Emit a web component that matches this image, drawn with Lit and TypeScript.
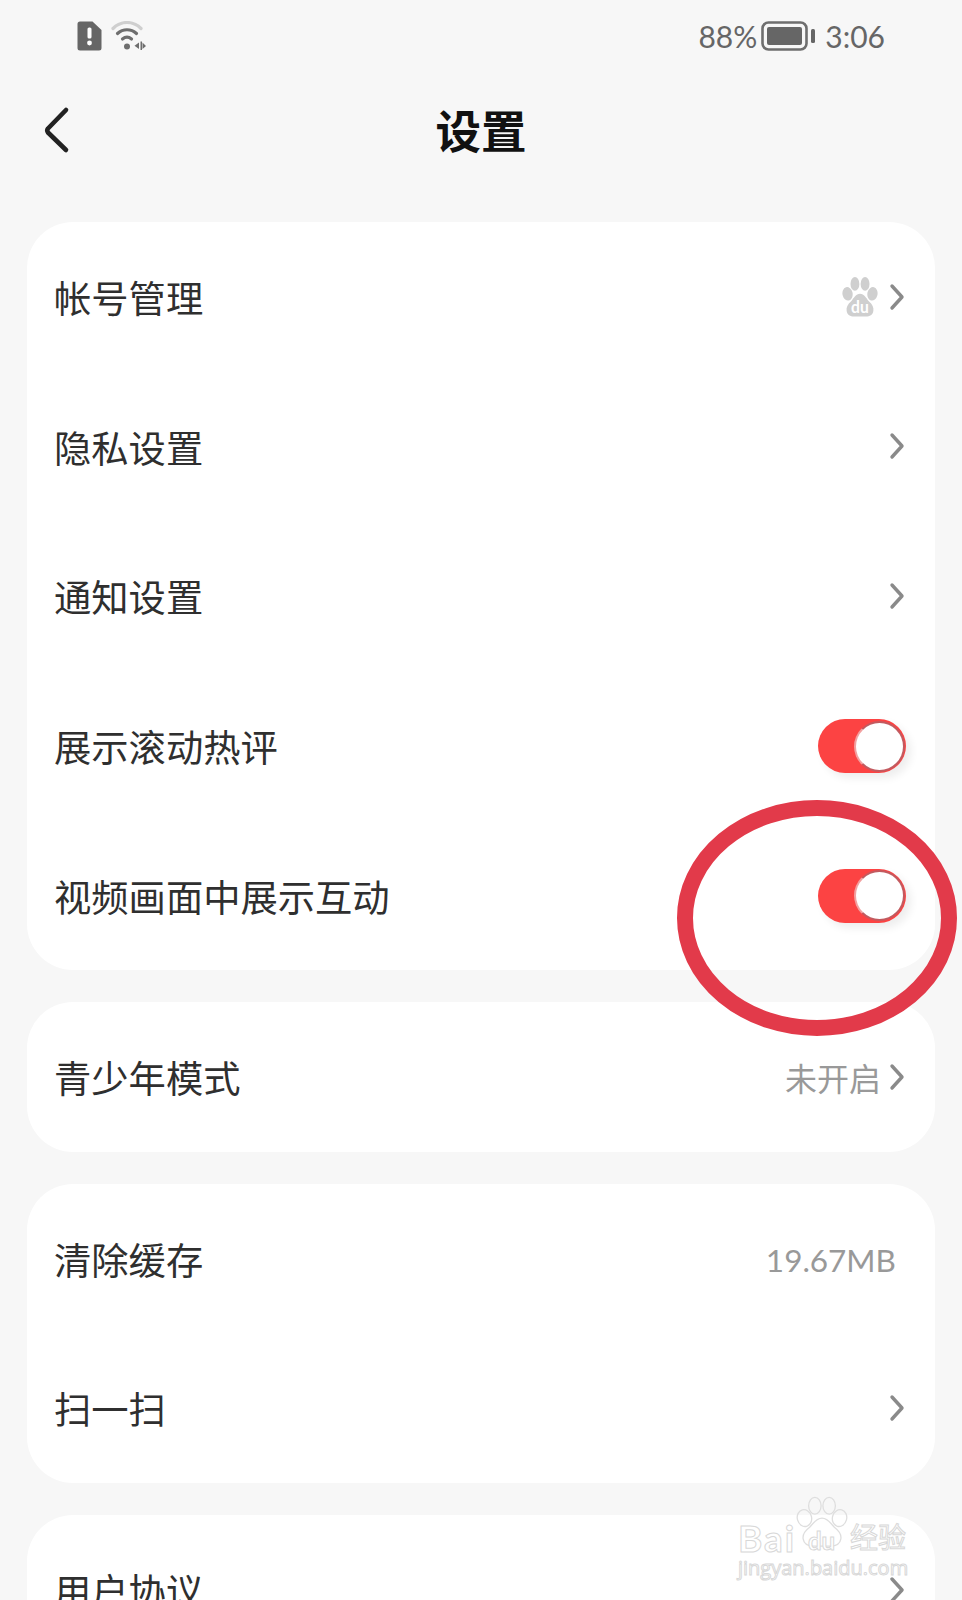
import { LitElement, html, css, svg } from "lit";
import { customElement } from "lit/decorators.js";

const chevron = html`<svg class="chev" viewBox="0 0 16 28" width="16" height="28"><path d="M3 3 L13 14 L3 25" fill="none" stroke="#8a8a8a" stroke-width="3.4" stroke-linecap="round" stroke-linejoin="round"/></svg>`;
const toggle = html`<span class="toggle"><span class="knob"></span></span>`;
const pawShapes = svg`
  <ellipse cx="6" cy="17" rx="5.5" ry="6.5" transform="rotate(-15 6 17)"/>
  <ellipse cx="14" cy="7.5" rx="4.8" ry="6.5"/>
  <ellipse cx="25" cy="7.5" rx="4.8" ry="6.5"/>
  <ellipse cx="33" cy="17" rx="5.5" ry="6.5" transform="rotate(15 33 17)"/>
  <path d="M19.5 17 C24 17 26 21 29 24 C33 27 34.5 30 34 33 C33.4 37 30 38.5 26 38.5 L13 38.5 C9 38.5 5.6 37 5 33 C4.5 30 6 27 10 24 C13 21 15 17 19.5 17 Z"/>`;

@customElement("app-root")
export class AppRoot extends LitElement {
  static styles = css`
    :host {
      display: block;
      position: relative;
      width: 962px;
      height: 1600px;
      overflow: hidden;
      background: #f7f7f7;
      font-family: "Noto Sans CJK SC", "Noto Sans", sans-serif;
      color: #2f2f2f;
    }
    .status {
      height: 74px;
      box-sizing: border-box;
      padding: 0 77px 3px 77px;
      display: flex;
      align-items: center;
      color: #666;
      font-family: "Lato", "Noto Sans", sans-serif;
      font-size: 30px;
    }
    .status .left { display: flex; align-items: center; gap: 9px; }
    .status .right { margin-left: auto; display: flex; align-items: center; gap: 10px; }
    .status .right .pct { margin-right: -6px; }
    .nav {
      height: 118px;
      margin-bottom: 30px;
      position: relative;
      display: flex;
      align-items: center;
      justify-content: center;
    }
    .title { font-size: 45.5px; font-weight: 700; color: #111; line-height: 1; margin-bottom: 6px; }
    .back { position: absolute; left: 43px; top: 32px; }
    .cards { display: flex; flex-direction: column; gap: 32px; padding: 0 27px; }
    .card { background: #fff; border-radius: 46px; }
    .row {
      height: 149.6px;
      padding: 0 29px 0 27px;
      display: flex;
      align-items: center;
      justify-content: space-between;
      font-size: 37.3px;
    }
    .label { line-height: 1; margin-top: 2px; }
    .end { display: flex; align-items: center; gap: 8px; color: #999; font-size: 32px; padding-right: 1px; }
    .latin { font-family: "Lato", "Noto Sans", sans-serif; margin-right: 10px; font-size: 31.5px; margin-top: 4px; padding-right: 0; }
    .paw { fill: #cfcfcf; margin-right: 3px; }
    .toggle {
      width: 88px;
      height: 54px;
      border-radius: 27px;
      background: #fc4343;
      position: relative;
      box-shadow: 5px 5px 9px rgba(0, 0, 0, 0.07);
      display: block;
      margin-top: 1px;
    }
    .knob {
      position: absolute;
      right: 1px;
      top: 1.5px;
      width: 51px;
      height: 51px;
      box-sizing: border-box;
      border-radius: 50%;
      background: #fff;
      border: 2px solid #c25a5f;
      border-left-color: #f2a0a0;
    }
    .chev { display: block; }
    .ring { position: absolute; left: 671px; top: 796px; pointer-events: none; }
    .mark { position: absolute; left: 736px; top: 1494px; width: 180px; height: 84px; pointer-events: none; }
    .mark .paw2 { position: absolute; left: 59px; top: 2px; fill: none; stroke: #dedede; stroke-width: 1; }
    .mark .t {
      position: absolute;
      white-space: nowrap;
      color: #fff;
      -webkit-text-stroke: 1px #d8d8d8;
      line-height: 1;
    }
    .mark .bai { left: 2px; top: 25px; font-family: "Lato", sans-serif; font-size: 37px; font-weight: 700; letter-spacing: 2px; }
    .mark .du { left: 72px; top: 35px; font-family: "Lato", sans-serif; font-size: 24px; font-weight: 700; }
    .mark .jy { left: 114px; top: 28px; font-size: 28px; }
    .mark .url { left: 2px; top: 64px; font-family: "Open Sans", sans-serif; font-size: 20px; }
  `;

  private row(label: string, end: unknown) {
    return html`<div class="row"><span class="label">${label}</span>${end}</div>`;
  }

  render() {
    return html`
      <div class="status">
        <div class="left">
          <svg width="25" height="30" viewBox="0 0 25 30"><path d="M3 0.5 H15.5 L24.5 9 V27 a2.5 2.5 0 0 1 -2.5 2.5 H3 a2.5 2.5 0 0 1 -2.5 -2.5 V3 a2.5 2.5 0 0 1 2.5 -2.5 Z" fill="#666"/><rect x="10.5" y="6.5" width="4" height="11" rx="1.6" fill="#fff"/><circle cx="12.5" cy="22" r="2.4" fill="#fff"/></svg>
          <svg width="36" height="30" viewBox="0 0 36 30" fill="none" stroke-linecap="round">
            <path d="M2 7.5 C10 -0.5 22 -0.5 30 7.5" stroke="#cfcfcf" stroke-width="3.2"/>
            <path d="M6.5 12.5 C12 7.5 20 7.5 25.5 12.5" stroke="#6e6e6e" stroke-width="3.2"/>
            <path d="M11.5 18 C14.5 15.5 17.5 15.5 20.5 18" stroke="#6e6e6e" stroke-width="3.2"/>
            <circle cx="16" cy="25.5" r="3" fill="#6e6e6e"/>
            <path d="M28 21.5 V28 L23.5 24.7 Z" fill="#6e6e6e" stroke="none"/>
            <path d="M29.5 20.5 h1.5 v8.5 h-1.5 Z M31.5 21.5 L35 25 L31.5 28 Z" fill="#6e6e6e" stroke="none"/>
          </svg>
        </div>
        <div class="right">
          <span class="pct">88%</span>
          <svg width="54" height="30" viewBox="0 0 54 30"><rect x="1.5" y="1.5" width="44" height="27" rx="6" fill="none" stroke="#6e6e6e" stroke-width="2.6"/><rect x="6" y="6" width="35" height="18" rx="2" fill="#666"/><rect x="50" y="8" width="4" height="14" rx="1.5" fill="#666"/></svg>
          <span>3:06</span>
        </div>
      </div>
      <div class="nav">
        <svg class="back" width="28" height="50" viewBox="0 0 28 50"><path d="M23 4 L5 22.5 Q3.5 24.5 5 26.5 L23 44" fill="none" stroke="#222" stroke-width="4.6" stroke-linecap="round" stroke-linejoin="round"/></svg>
        <div class="title">设置</div>
      </div>
      <div class="cards">
        <div class="card">
          ${this.row("帐号管理", html`<span class="end"><svg class="paw" width="36" height="42" viewBox="0 0 39 40" preserveAspectRatio="none">${pawShapes}<text x="19.5" y="35" text-anchor="middle" font-family="Lato, sans-serif" font-size="17" font-weight="700" fill="#fff">du</text></svg>${chevron}</span>`)}
          ${this.row("隐私设置", html`<span class="end">${chevron}</span>`)}
          ${this.row("通知设置", html`<span class="end">${chevron}</span>`)}
          ${this.row("展示滚动热评", toggle)}
          ${this.row("视频画面中展示互动", toggle)}
        </div>
        <div class="card">
          ${this.row("青少年模式", html`<span class="end">未开启${chevron}</span>`)}
        </div>
        <div class="card">
          ${this.row("清除缓存", html`<span class="end latin">19.67MB</span>`)}
          ${this.row("扫一扫", html`<span class="end">${chevron}</span>`)}
        </div>
        <div class="card">
          ${this.row("用户协议", html`<span class="end">${chevron}</span>`)}
        </div>
      </div>
      <svg class="ring" width="292" height="246" viewBox="0 0 292 246"><ellipse cx="146" cy="122" rx="132" ry="110" fill="none" stroke="#e23a4a" stroke-width="16"/></svg>
      <div class="mark">
        <svg class="paw2" width="54" height="52" viewBox="0 0 39 40">${pawShapes}</svg>
        <span class="t bai">Bai</span>
        <span class="t du">du</span>
        <span class="t jy">经验</span>
        <span class="t url">jingyan.baidu.com</span>
      </div>
    `;
  }
}
